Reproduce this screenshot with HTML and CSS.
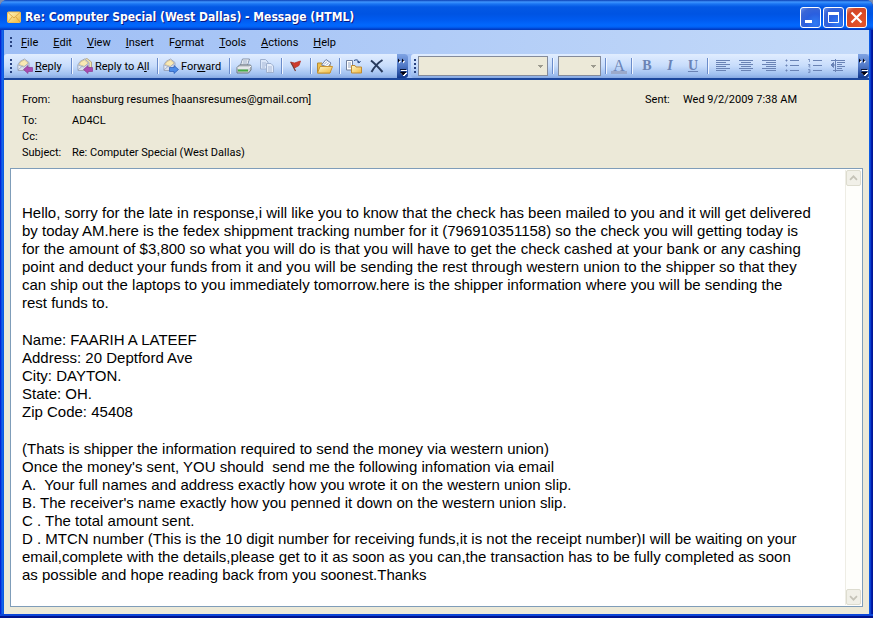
FILE: index.html
```html
<!DOCTYPE html>
<html lang="en">
<head>
<meta charset="utf-8">
<title>Re: Computer Special (West Dallas) - Message (HTML)</title>
<link rel="stylesheet" href="styles.css">
</head>
<body>
<svg class="defs" aria-hidden="true">
  <defs>
    <linearGradient id="gold" x1="0" y1="0" x2="1" y2="1"><stop offset="0" stop-color="#fff9c8"/><stop offset="1" stop-color="#f0b63c"/></linearGradient>
    <linearGradient id="paper" x1="0" y1="0" x2="1" y2="1"><stop offset="0" stop-color="#ffffff"/><stop offset="1" stop-color="#c3cee2"/></linearGradient>
    <g id="letter">
      <path d="M.8 7 3 3.500 7.500 1 12 4.500V12.500H1z" fill="url(#paper)" stroke="#98a3b8" stroke-width=".9"/>
      <path d="M2 6.500 4 3.500 7.500 2 11 5 7.500 8.500z" fill="#f8e9b4" stroke="#cdb580" stroke-width=".7"/>
      <path d="M1 12 5.500 8M1 7l5.500 2L11.500 5.500" stroke="#a0aec8" stroke-width=".9" fill="none"/>
    </g>
    <path id="back" d="M6.500 11.500 11 7.500V9.500H15.500V13.500H11V15.500z" fill="#a94bb0" stroke="#8a3d92" stroke-width=".7"/>
    <g id="more">
      <path d="M2 5.500 4 7.500 2 9.500zM6 5.500 8 7.500 6 9.500z" fill="#fff"/>
      <path d="M1 4.500 3 6.500 1 8.500zM5 4.500 7 6.500 5 8.500z" fill="#001"/>
      <path d="M4 16.500h6M4 19h6l-3 3z" stroke="#fff" fill="#fff"/>
      <path d="M3 15.500h6M3.500 18h5.500l-3 3z" stroke="#001" stroke-width=".8" fill="#001"/>
    </g>
  </defs>
</svg>
<div class="window">
  <header class="titlebar">
    <svg class="app-icon" viewBox="0 0 14 12" aria-hidden="true"><rect x=".5" y="1" width="13" height="10.500" rx="1" fill="url(#gold)" stroke="#f5c050"/><path d="M1 1.500 7 7l6-5.500M1 11l4-5M13 11 9 6" fill="none" stroke="#d99a35" stroke-width=".8"/></svg>
    <h1>Re: Computer Special (West Dallas) - Message (HTML)</h1>
    <div class="win-buttons">
      <button type="button" aria-label="Minimize"><svg viewBox="0 0 19 19"><path d="M4 13.500h7" stroke="#fff" stroke-width="3"/></svg></button>
      <button type="button" aria-label="Maximize"><svg viewBox="0 0 19 19"><path d="M4.500 5h10v9.500h-10z" fill="none" stroke="#fff"/><path d="M4 5.500h11" stroke="#fff" stroke-width="3"/></svg></button>
      <button type="button" aria-label="Close" class="close"><svg viewBox="0 0 19 19"><path d="m4.500 4.500 10 10m0-10-10 10" stroke="#fff" stroke-width="2.200"/></svg></button>
    </div>
  </header>

  <nav class="menubar" aria-label="Menu">
    <span class="grip small"></span>
    <button type="button"><u>F</u>ile</button>
    <button type="button"><u>E</u>dit</button>
    <button type="button"><u>V</u>iew</button>
    <button type="button"><u>I</u>nsert</button>
    <button type="button">F<u>o</u>rmat</button>
    <button type="button"><u>T</u>ools</button>
    <button type="button"><u>A</u>ctions</button>
    <button type="button"><u>H</u>elp</button>
  </nav>

  <div class="toolbars">
    <div class="toolbar standard" role="toolbar" aria-label="Standard">
      <span class="grip"></span>
      <button type="button" class="labelled reply"><svg viewBox="0 0 16 16"><use href="#letter"/><use href="#back"/></svg><span><u>R</u>eply</span></button>
      <span class="sep"></span>
      <button type="button" class="labelled reply-all"><svg viewBox="0 0 16 16"><path d="M4 5 6 2 10 .5 14.500 4V10H4z" fill="#f5e6ad" stroke="#a89a78" stroke-width=".8"/><use href="#letter"/><use href="#back"/></svg><span>Reply to A<u>l</u>l</span></button>
      <span class="sep"></span>
      <button type="button" class="labelled forward"><svg viewBox="0 0 16 16"><use href="#letter"/><path d="M15.500 11.500 11 7.500V9.500H6.500V13.500H11V15.500z" fill="#4c8be8" stroke="#2458b4" stroke-width=".7"/></svg><span>For<u>w</u>ard</span></button>
      <span class="sep"></span>
      <button type="button" class="tool" aria-label="Print"><svg viewBox="0 0 16 16"><path d="m4.500 7 2-6h7l-2 6z" fill="#fff" stroke="#8291a8"/><path d="M7 3h4.500M6.500 5H11" stroke="#8ca0bd"/><path d="M1 9.500 3.500 7h11l.5 1v4l-2.500 3H1z" fill="#cdd1d5" stroke="#707a82"/><path d="M1.500 10h11L15 8" fill="none" stroke="#fff"/><path d="M2 12.500h10" stroke="#45ab45" stroke-width="2"/></svg></button>
      <button type="button" class="tool" aria-label="Copy" disabled><svg viewBox="0 0 16 16"><path d="M1.500 1.500h5l2.500 2.500V11H1.500z" fill="#dbe6f8" stroke="#9eb0cf"/><path d="M3 5h4M3 7h4M3 9h3" stroke="#a8b8d6"/><path d="M7.500 5.500h4.500l2.500 2.500v6.500h-7z" fill="#e4ecfa" stroke="#9eb0cf"/><path d="M9 9h4M9 11h4M9 13h4" stroke="#a8b8d6"/></svg></button>
      <span class="sep"></span>
      <button type="button" class="tool" aria-label="Follow up"><svg viewBox="0 0 16 16"><path d="M2.500 4 6.500 5 12.500 3 11 7.500 6.500 10z" fill="#cf3a2d" stroke="#b5352a" stroke-width=".8"/><path d="M3 4.500 7.500 13" stroke="#7b3b35" stroke-width="1.300"/></svg></button>
      <span class="sep"></span>
      <button type="button" class="tool" aria-label="Open folder"><svg viewBox="0 0 16 16"><path d="M.5 15V5H5l1 1h7v9z" fill="#efbf4a" stroke="#b48a35"/><path d="M4.500 7 9 1.500l5 3.500-3 4z" fill="#fff" stroke="#6d7fa6"/><path d="m7 6.500 3-3M9 7.500l3-3" stroke="#8fa3c8"/><path d="M.5 15 3 8.500h12.500L13 15z" fill="url(#gold)" stroke="#c99432"/></svg></button>
      <span class="sep"></span>
      <button type="button" class="tool" aria-label="Move to folder"><svg viewBox="0 0 16 16"><path d="M.5 2.500h6V12h-6z" fill="#fff" stroke="#71809c"/><path d="M2 5h3M2 7h3M2 9h3" stroke="#91a2c2"/><path d="M8 2.500q4-2 5 2M11 3.500l2 1.500 1.500-2" fill="none" stroke="#26457f"/><path d="M5.500 15V7.500H9l1 1.500h5.500V15z" fill="url(#gold)" stroke="#c08a30"/></svg></button>
      <button type="button" class="tool" aria-label="Delete"><svg viewBox="0 0 16 16"><path d="M2 2.500Q7 6.500 13.500 14M13.500 2Q7 6 2.500 14" fill="none" stroke="#283b5d" stroke-width="2"/></svg></button>
      <button type="button" class="overflow" aria-label="Standard toolbar options"><svg viewBox="0 0 11 24"><use href="#more"/></svg></button>
    </div>
    <div class="toolbar formatting" role="toolbar" aria-label="Formatting">
      <span class="grip"></span>
      <select class="font-name" aria-label="Font" disabled><option></option></select>
      <span class="sep"></span>
      <select class="font-size" aria-label="Font size" disabled><option></option></select>
      <span class="sep"></span>
      <button type="button" class="tool glyph color" aria-label="Font color" disabled>A</button>
      <span class="sep"></span>
      <button type="button" class="tool glyph" aria-label="Bold" disabled><b>B</b></button>
      <button type="button" class="tool glyph" aria-label="Italic" disabled><i>I</i></button>
      <button type="button" class="tool glyph" aria-label="Underline" disabled><u>U</u></button>
      <span class="sep"></span>
      <button type="button" class="tool" aria-label="Align left" disabled><svg viewBox="0 0 16 16"><path d="M1 2.500h14M1 4.500h10M1 6.500h14M1 8.500h10M1 10.500h14M1 12.500h10"/></svg></button>
      <button type="button" class="tool" aria-label="Center" disabled><svg viewBox="0 0 16 16"><path d="M1 2.500h14M3 4.500h10M1 6.500h14M3 8.500h10M1 10.500h14M3 12.500h10"/></svg></button>
      <button type="button" class="tool" aria-label="Align right" disabled><svg viewBox="0 0 16 16"><path d="M1 2.500h14M5 4.500h10M1 6.500h14M5 8.500h10M1 10.500h14M5 12.500h10"/></svg></button>
      <button type="button" class="tool" aria-label="Bullets" disabled><svg viewBox="0 0 16 16"><path d="M6 2.500h9M6 7.500h9M6 12.500h9M1.500 2.500h2M1.500 7.500h2M1.500 12.500h2"/><path d="M2.500 1.500v2M2.500 6.500v2M2.500 11.500v2"/></svg></button>
      <button type="button" class="tool" aria-label="Numbering" disabled><svg viewBox="0 0 16 16"><path d="M6 2.500h9M6 7.500h9M6 12.500h9"/><path d="M2.500 1v3M1 1.500h1.500M1 6.500h2v1H2v1.500h1.500M1 11.500h2v3H1M1.500 13H3" stroke-width=".7"/></svg></button>
      <button type="button" class="tool" aria-label="Decrease indent" disabled><svg viewBox="0 0 16 16"><path d="M1 2.500h14M7 4.500h8M7 6.500h5M7 8.500h8M7 10.500h5M3 12.500h10M5.500 1v13"/><path d="M1 7 3.500 4.500v5z" fill="#6a83b5"/><path d="M2 7h4"/></svg></button>
      <button type="button" class="overflow" aria-label="Formatting toolbar options"><svg viewBox="0 0 11 24"><use href="#more"/></svg></button>
    </div>
  </div>

  <section class="headers">
    <dl>
      <div class="from"><dt>From:</dt><dd>haansburg resumes [haansresumes@gmail.com]</dd></div>
      <div><dt>To:</dt><dd>AD4CL</dd></div>
      <div><dt>Cc:</dt><dd></dd></div>
      <div><dt>Subject:</dt><dd>Re: Computer Special (West Dallas)</dd></div>
    </dl>
    <dl class="sent">
      <div><dt>Sent:</dt><dd>Wed 9/2/2009 7:38 AM</dd></div>
    </dl>
  </section>

  <main class="message">
    <article>
      <p>Hello, sorry for the late in response,i will like you to know that the check has been mailed to you and it will get delivered<br>by today AM.here is the fedex shippment tracking number for it (796910351158) so the check you will getting today is<br>for the amount of $3,800 so what you will do is that you will have to get the check cashed at your bank or any cashing<br>point and deduct your funds from it and you will be sending the rest through western union to the shipper so that they<br>can ship out the laptops to you immediately tomorrow.here is the shipper information where you will be sending the<br>rest funds to.</p>
      <p>Name: FAARIH A LATEEF<br>Address: 20 Deptford Ave<br>City: DAYTON.<br>State: OH.<br>Zip Code: 45408</p>
      <p>(Thats is shipper the information required to send the money via western union)<br>Once the money's sent, YOU should&nbsp; send me the following infomation via email<br>A.&nbsp; Your full names and address exactly how you wrote it on the western union slip.<br>B. The receiver's name exactly how you penned it down on the western union slip.<br>C . The total amount sent.<br>D . MTCN number (This is the 10 digit number for receiving funds,it is not the receipt number)I will be waiting on your<br>email,complete with the details,please get to it as soon as you can,the transaction has to be fully completed as soon<br>as possible and hope reading back from you soonest.Thanks</p>
    </article>
    <div class="scrollbar">
      <button type="button" aria-label="Scroll up" disabled><svg viewBox="0 0 15 15"><path d="m3.500 9 4-4 4 4" fill="none" stroke="#c5c3b8" stroke-width="2"/></svg></button>
      <button type="button" aria-label="Scroll down" disabled><svg viewBox="0 0 15 15"><path d="m3.500 6 4 4 4-4" fill="none" stroke="#c5c3b8" stroke-width="2"/></svg></button>
    </div>
  </main>
</div>
</body>
</html>
```
FILE: styles.css
```css
* { box-sizing: border-box; }

body {
  margin: 0;
  background: #7d8db0;
  font-family: Roboto, "DejaVu Sans Condensed", sans-serif;
  font-size: 11px;
  color: #000;
}

button {
  margin: 0;
  padding: 0;
  border: 0;
  background: none;
  font: inherit;
  color: inherit;
}

svg { display: block; }
.defs { position: absolute; width: 0; height: 0; }

.window {
  display: flex;
  flex-direction: column;
  min-height: 100vh;
  padding: 0 4px 4px;
  border-radius: 7px 7px 0 0;
  background: linear-gradient(90deg, #0019cf 0, #0831d9 1px, #166aee 2px, #0855dd 4px, #0855dd calc(100% - 4px), #1260e8 calc(100% - 3px), #0020b8 calc(100% - 2px), #00138c 100%);
  box-shadow: inset 0 -2px #00138c, inset 0 -4px #0c46d8;
}

.titlebar {
  display: flex;
  align-items: center;
  height: 30px;
  margin: 0 -4px;
  padding: 4px 6px 0 7px;
  border-radius: 7px 7px 0 0;
  background: linear-gradient(#0a3fb4 0, #3f96ff 2px, #1a74f2 4px, #0358e4 7px, #0054e3 14px, #005bf0 20px, #0268fd 25px, #0162f5 27px, #0040cc 29px, #0238b4 30px);
}

.app-icon { width: 14px; height: 12px; }

.titlebar h1 {
  flex: 1;
  margin: 0 0 0 4px;
  font: bold 12px/20px "DejaVu Sans Condensed", sans-serif;
  color: #fff;
  text-shadow: 1px 1px #0a1883;
  white-space: nowrap;
}

.win-buttons { display: flex; gap: 2px; }

.win-buttons button {
  width: 21px;
  height: 21px;
  border: 1px solid #fff;
  border-radius: 3px;
  background: radial-gradient(circle at 75% 80%, #2f7cf5, #2a5fdf 45%, #3a66d6 75%, #6c92ec);
}

.win-buttons .close { background: radial-gradient(circle at 75% 80%, #e4552b, #dc4a26 50%, #cf4729 75%, #ec9a84); }
.win-buttons svg { width: 19px; height: 19px; }

.menubar {
  display: flex;
  align-items: center;
  gap: 15px;
  height: 24px;
  padding-left: 6px;
  background: linear-gradient(90deg, #9ebef5, #c4daf9);
}

.menubar .grip { margin-right: -6px; }

.grip {
  flex: none;
  width: 2px;
  height: 15px;
  background: repeating-linear-gradient(#27417f 0 2px, transparent 2px 4px);
}

.grip.small { height: 10px; }

.toolbars {
  display: flex;
  gap: 3px;
  height: 26px;
  border-bottom: 2px solid #1c479c;
  background: #9ebef5;
}

.toolbar {
  display: flex;
  align-items: center;
  padding-left: 6px;
  border-radius: 3px;
  background: linear-gradient(#e1edff, #c7dcfb 50%, #a0c0f0 85%, #86a9e2);
}

.formatting { flex: 1; padding-left: 3px; }

.labelled {
  display: flex;
  align-items: center;
  gap: 2px;
  white-space: nowrap;
}

.labelled svg, .tool svg { width: 16px; height: 16px; }
.reply { width: 50px; margin-left: 5px; }
.reply-all { width: 76px; }
.forward { width: 62px; }

.sep {
  flex: none;
  width: 2px;
  height: 16px;
  margin: 0 4px;
  border-left: 1px solid #6a8ccb;
  border-right: 1px solid #f1f6ff;
}

.tool {
  display: grid;
  place-items: center;
  flex: none;
  width: 20px;
  height: 20px;
}

.tool + .tool { margin-left: 3px; }
.standard .sep + .tool { margin-left: -1px; }
.formatting .tool svg { fill: none; stroke: #6a83b5; }

.glyph {
  font: bold 14px/16px "Liberation Serif", serif;
  color: #6a83b5;
}

.color {
  width: 16px;
  height: 16px;
  border-bottom: 3px solid #9baacb;
  font-size: 16px;
  font-weight: normal;
}

.overflow {
  flex: none;
  align-self: stretch;
  width: 11px;
  margin-left: auto;
  border-radius: 0 3px 3px 0;
  background: linear-gradient(#7fa3e4, #5078c6 50%, #12398f);
}

.standard .overflow { margin-left: 10px; }
.overflow svg { width: 11px; height: 24px; }

select {
  appearance: none;
  height: 20px;
  margin: 0;
  border: 1px solid #848b9b;
  border-radius: 0;
  background: linear-gradient(#9c9a8e, #9c9a8e) right 4px top 8px / 5px 1px no-repeat, linear-gradient(#9c9a8e, #9c9a8e) right 5px top 9px / 3px 1px no-repeat, linear-gradient(#9c9a8e, #9c9a8e) right 6px top 10px / 1px 1px no-repeat, #ece9d8;
  opacity: 1;
}

.font-name { width: 130px; margin-left: 2px; }
.font-size { width: 43px; }

.headers {
  display: flex;
  justify-content: space-between;
  padding: 12px 72px 7px 18px;
  background: #ece9d8;
  line-height: 16px;
}

dl { margin: 0; }
dl > div { display: flex; min-height: 16px; }
.from { margin-bottom: 5px; }
dt { width: 50px; }
dd { margin: 0; white-space: nowrap; }
.sent dt { width: 38px; }

.message {
  display: flex;
  flex: 1;
  border: solid #ece9d8;
  border-width: 0 6px 7px;
  background: #fff;
  box-shadow: inset 0 0 0 1px #7f9db9;
}

article {
  flex: 1;
  padding: 36px 8px 22px 12px;
  font: 15px/18px "Liberation Sans", Arial, sans-serif;
}

article p { margin: 0 0 19px; }
article p + p + p { margin-bottom: 0; }

.scrollbar {
  display: flex;
  flex-direction: column;
  justify-content: space-between;
  width: 17px;
  margin: 2px 1px 2px 0;
  border-left: 1px solid #eeede5;
  background: #fefefb;
}

.scrollbar button {
  width: 15px;
  height: 16px;
  border: 1px solid #dddccf;
  border-radius: 2px;
  background: #f1f0e8;
}

.scrollbar svg { width: 13px; height: 13px; }
```
